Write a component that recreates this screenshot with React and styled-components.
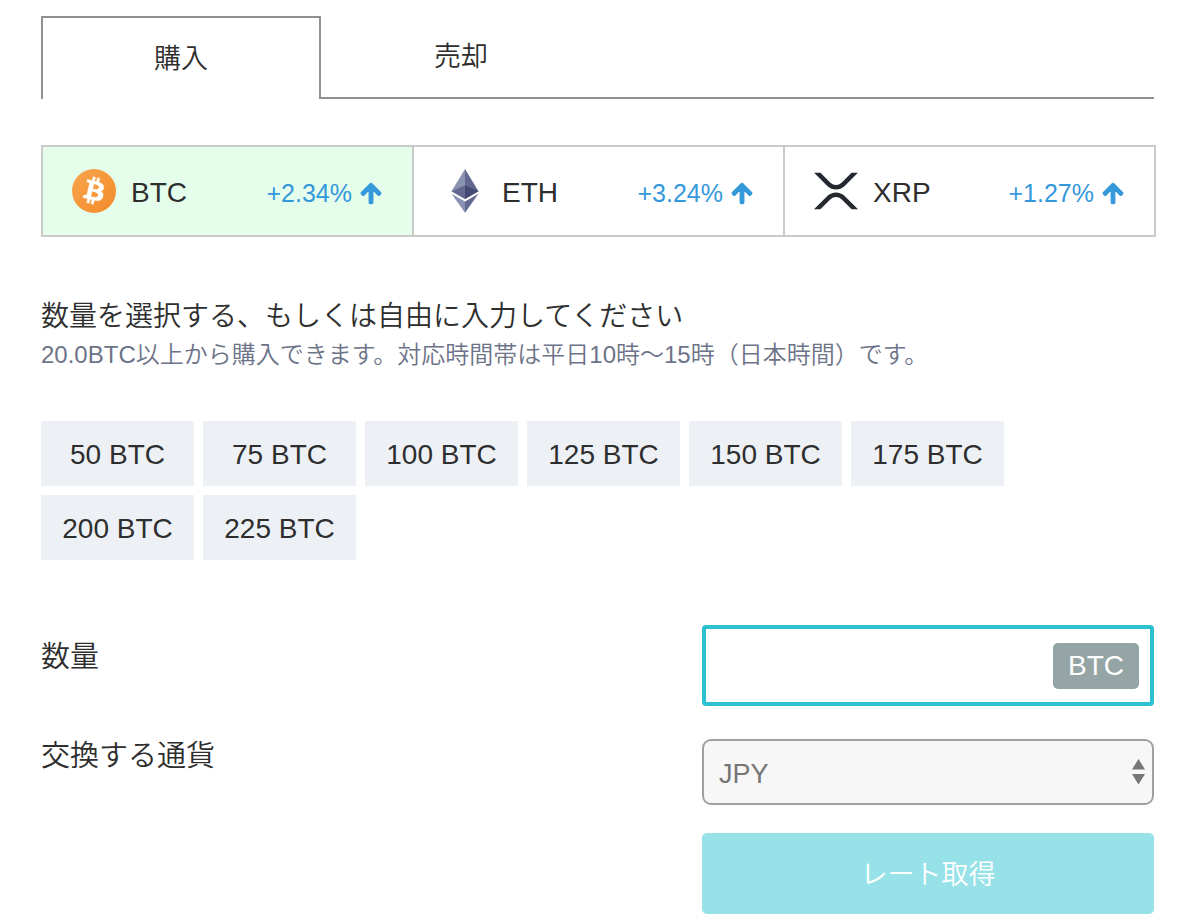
import React, { useState } from "react";
import styled, { createGlobalStyle } from "styled-components";
import { FaArrowUp } from "react-icons/fa";

const GlobalStyle = createGlobalStyle`
  *, *::before, *::after { box-sizing: border-box; }
  body {
    margin: 0;
    background: #fff;
    color: #2e2e2e;
    font-family: "Liberation Sans", "Noto Sans CJK JP DemiLight", "Noto Sans CJK JP", sans-serif;
    font-size: 28px;
    font-weight: 350;
    line-height: 40px;
  }
  button, input, select { font: inherit; color: inherit; margin: 0; }
`;

const Page = styled.main`
  padding: 16px 44px 9px 41px;
`;

const Tabs = styled.div`
  display: flex;
  height: 83px;
  padding-right: 2px;
`;

const Tab = styled.button`
  flex: 0 0 280px;
  padding: 0;
  background: none;
  border: solid #909090;
  border-width: ${(p) => (p.$active ? "2px 2px 0" : "0 0 2px")};
  font-size: 27px;
  cursor: pointer;
`;

const TabsRest = styled.div`
  flex: 1;
  border-bottom: 2px solid #909090;
`;

const Coins = styled.div`
  display: flex;
  margin-top: 46px;
  border: 2px solid #cacaca;
`;

const Coin = styled.button`
  flex: 1;
  display: flex;
  align-items: center;
  height: 88px;
  padding: 0 30px 0 29px;
  border: 0;
  background: ${(p) => (p.$active ? "#e5feeb" : "#fff")};
  cursor: pointer;
  & + & { border-left: 2px solid #cacaca; }
`;

const CoinIcon = styled.svg`
  width: 44px;
  height: 44px;
  margin-right: 15px;
`;

const CoinName = styled.span`
  padding-top: 3px;
`;

const Change = styled.span`
  display: flex;
  align-items: center;
  gap: 8px;
  margin-left: auto;
  padding-top: 4px;
  color: #3498db;
  font-size: 25px;
`;

const UpArrow = styled(FaArrowUp)`
  width: 22px;
  height: 23px;
  overflow: visible;
  stroke: currentColor;
  stroke-width: 28px;
  stroke-linejoin: round;
`;

const Heading = styled.h1`
  margin: 62px 0 0;
  font-size: 28px;
  font-weight: inherit;
  line-height: 36px;
`;

const Note = styled.p`
  margin: 0;
  color: #6d7388;
  font-size: 24px;
`;

const Amounts = styled.div`
  display: flex;
  flex-wrap: wrap;
  gap: 9px;
  max-width: 1000px;
  margin: 46px 0 65px;
`;

const Amount = styled.button`
  width: 153px;
  height: 65px;
  padding: 2px 0 0;
  border: 0;
  background: #edf1f6;
  cursor: pointer;
`;

const Form = styled.form`
  padding-right: 2px;
`;

const Field = styled.div`
  display: flex;
  justify-content: space-between;
  margin-bottom: ${(p) => p.$gap}px;
`;

const Label = styled.label`
  padding-top: ${(p) => p.$top}px;
  font-size: 29px;
  line-height: 34px;
`;

const Control = styled.div`
  display: flex;
  align-items: center;
  position: relative;
  width: 452px;
`;

const AmountBox = styled(Control)`
  height: 81px;
  padding: 0 11px;
  border: 4px solid #2cc1d1;
  border-radius: 4px;
`;

const AmountInput = styled.input`
  flex: 1;
  min-width: 0;
  height: 48px;
  border: 0;
  outline: 0;
  background: none;
`;

const Unit = styled.span`
  padding: 3px 15px;
  border-radius: 5px;
  background: #95a5a6;
  color: #fff;
`;

const Select = styled.select`
  appearance: none;
  width: 100%;
  height: 66px;
  padding: 3px 15px 0;
  border: 2px solid #a0a0a0;
  border-radius: 9px;
  background: #f7f7f7;
  color: #777;
  font-size: 27px;
`;

const SelectArrows = styled.svg`
  position: absolute;
  right: 9px;
  width: 13px;
  height: 26px;
  pointer-events: none;
`;

const Submit = styled.button`
  display: block;
  width: 452px;
  height: 81px;
  margin-left: auto;
  padding: 2px 0 0;
  border: 0;
  border-radius: 5px;
  background: #97e2e8;
  color: #fff;
  font-size: 27px;
  cursor: pointer;
`;

const BtcIcon = () => (
  <CoinIcon viewBox="0 0 64 64" aria-hidden="true">
    <defs>
      <linearGradient id="btc" x1="0" y1="0" x2="1" y2="1">
        <stop offset="0" stopColor="#f9a54e" />
        <stop offset="1" stopColor="#f38b2a" />
      </linearGradient>
    </defs>
    <circle cx="32" cy="32" r="32" fill="url(#btc)" />
    <path
      fill="#fff"
      stroke="#fff"
      strokeWidth="0.6"
      d="M46.1 27.4c.6-4.3-2.6-6.5-7-8l1.4-5.7-3.5-.9-1.4 5.5c-.9-.2-1.8-.4-2.8-.7l1.4-5.5-3.5-.9-1.4 5.7c-.7-.2-1.5-.3-2.2-.5l-4.8-1.2-.9 3.7s2.6.6 2.5.6c1.4.4 1.7 1.3 1.6 2l-1.6 6.6c.1 0 .2.1.4.1l-.4-.1-2.3 9.1c-.2.4-.6 1.1-1.6.8 0 .1-2.5-.6-2.5-.6l-1.7 4 4.5 1.1 2.5.6-1.4 5.8 3.4.9 1.5-5.7c.9.2 1.8.5 2.7.7l-1.4 5.7 3.5.9 1.4-5.8c6 1.1 10.5.7 12.3-4.7 1.5-4.3 0-6.9-3.2-8.5 2.3-.5 4-2.1 4.500-5.200zm-8 11.200c-1.100 4.300-8.400 2-10.800 1.400l1.900-7.700c2.400.6 10 1.800 8.900 6.300zm1.100-11.300c-1 3.900-7.100 1.900-9.100 1.400l1.800-7c2 .5 8.400 1.400 7.300 5.600z"
    />
  </CoinIcon>
);

const EthIcon = () => (
  <CoinIcon viewBox="0 0 44 44" aria-hidden="true">
    <path fill="#8a92b2" d="M22 0v30L8.500 22.200z" />
    <path fill="#62688f" d="M22 0v30l13.500-7.800z" />
    <path fill="#62688f" d="M22 16.200v13.900L8.500 22.200z" />
    <path fill="#454a75" d="M22 16.200v13.900l13.500-7.900z" />
    <path fill="#8a92b2" d="M8.500 24.700 22 32.600V43.800z" />
    <path fill="#62688f" d="M35.500 24.700 22 32.600V43.800z" />
  </CoinIcon>
);

const XrpIcon = () => (
  <CoinIcon viewBox="0 0 512 424" aria-hidden="true">
    <path
      fill="#23292f"
      d="M437 0h74L357 152.480c-55.770 55.190-146.190 55.190-202 0L.94 0H75l117 115.830a91.100 91.100 0 0 0 127.910 0zM74.050 424H0l155-153.420c55.770-55.190 146.190-55.190 202 0L512 424h-74L320 307.230a91.100 91.100 0 0 0-127.910 0z"
    />
  </CoinIcon>
);

const coins = [
  { name: "BTC", change: "+2.34%", Icon: BtcIcon },
  { name: "ETH", change: "+3.24%", Icon: EthIcon },
  { name: "XRP", change: "+1.27%", Icon: XrpIcon },
];

const amounts = [50, 75, 100, 125, 150, 175, 200, 225];

export default function App() {
  const [tab, setTab] = useState("購入");
  const [coin, setCoin] = useState("BTC");
  const [amount, setAmount] = useState("");

  return (
    <>
      <GlobalStyle />
      <Page>
        <Tabs>
          {["購入", "売却"].map((name) => (
            <Tab key={name} type="button" $active={tab === name} onClick={() => setTab(name)}>
              {name}
            </Tab>
          ))}
          <TabsRest />
        </Tabs>

        <Coins>
          {coins.map(({ name, change, Icon }) => (
            <Coin key={name} type="button" $active={coin === name} onClick={() => setCoin(name)}>
              <Icon />
              <CoinName>{name}</CoinName>
              <Change>
                {change}
                <UpArrow aria-hidden="true" />
              </Change>
            </Coin>
          ))}
        </Coins>

        <Heading>数量を選択する、もしくは自由に入力してください</Heading>
        <Note>20.0BTC以上から購入できます。対応時間帯は平日10時〜15時（日本時間）です。</Note>

        <Amounts>
          {amounts.map((value) => (
            <Amount key={value} type="button" onClick={() => setAmount(String(value))}>
              {value} BTC
            </Amount>
          ))}
        </Amounts>

        <Form onSubmit={(e) => e.preventDefault()}>
          <Field $gap={33}>
            <Label htmlFor="amount" $top={15}>数量</Label>
            <AmountBox>
              <AmountInput
                id="amount"
                inputMode="decimal"
                value={amount}
                onChange={(e) => setAmount(e.target.value)}
              />
              <Unit>{coin}</Unit>
            </AmountBox>
          </Field>
          <Field $gap={28}>
            <Label htmlFor="currency" $top={0}>交換する通貨</Label>
            <Control>
              <Select id="currency" defaultValue="JPY">
                <option>JPY</option>
              </Select>
              <SelectArrows viewBox="0 0 13 26" aria-hidden="true">
                <path fill="#777" d="M6.500 0 13 10.500H0zM0 15h13L6.500 25.500z" />
              </SelectArrows>
            </Control>
          </Field>
          <Submit type="submit">レート取得</Submit>
        </Form>
      </Page>
    </>
  );
}
